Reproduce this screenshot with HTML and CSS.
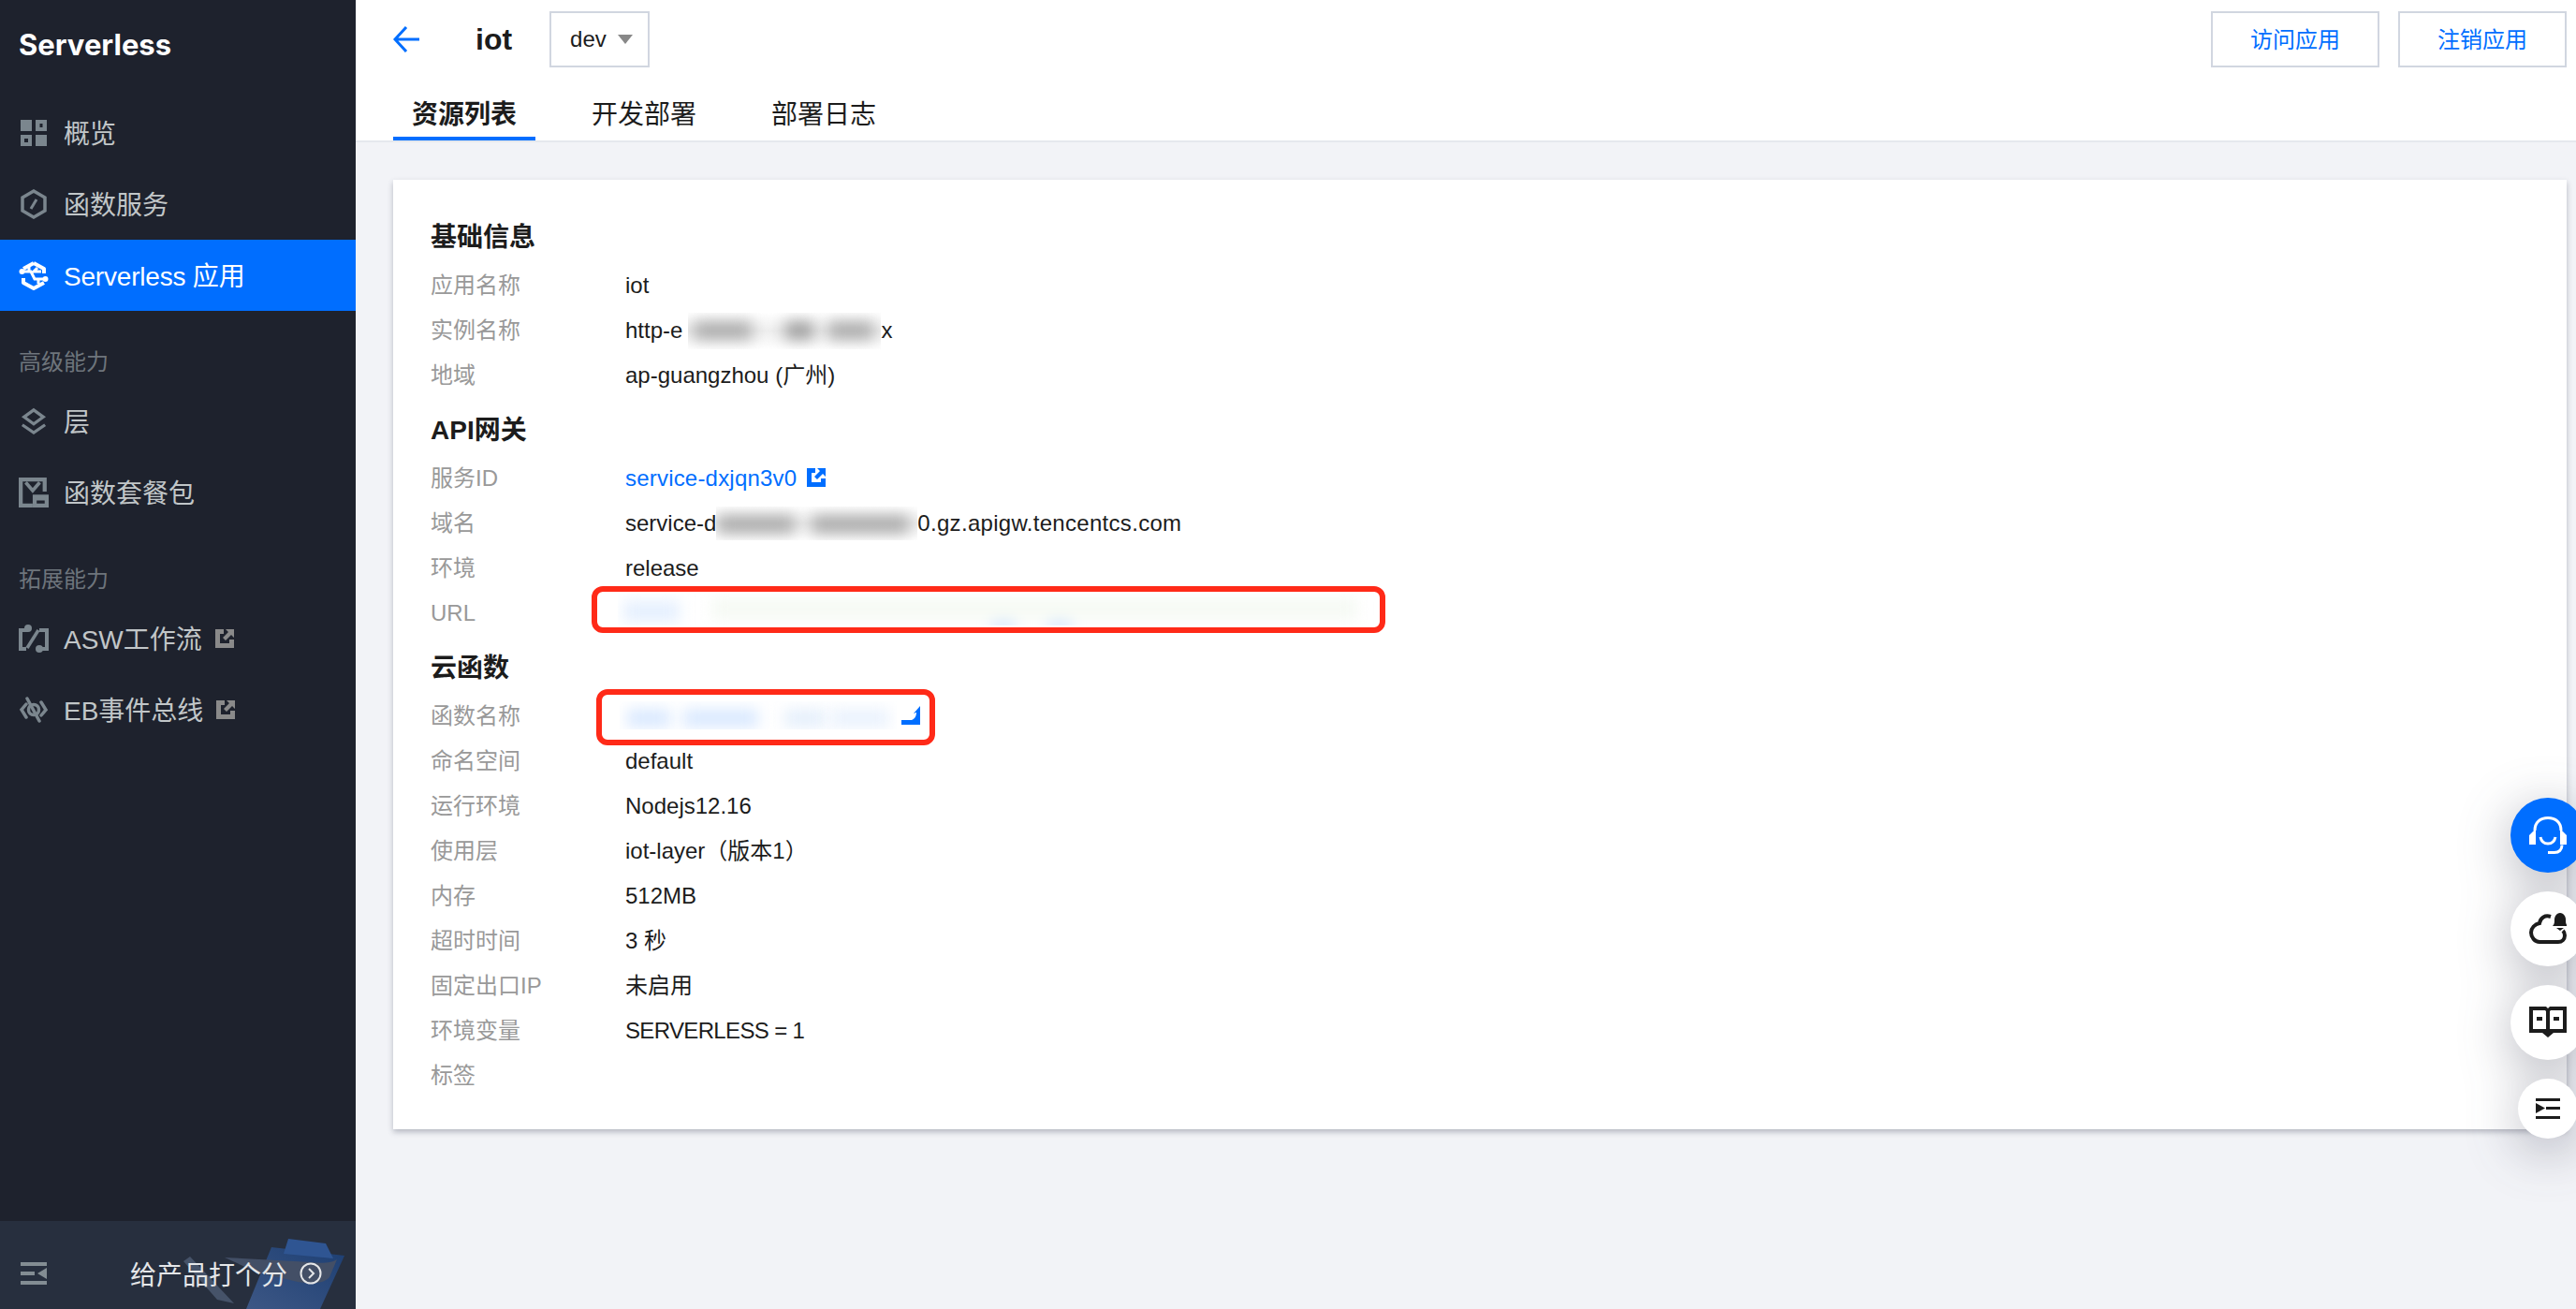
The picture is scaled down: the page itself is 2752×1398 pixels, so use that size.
FILE: index.html
```html
<!DOCTYPE html>
<html lang="zh">
<head>
<meta charset="utf-8">
<title>Serverless 应用</title>
<link rel="stylesheet" href="styles.css">
</head>
<body>
<div class="app">
  <aside class="sidebar">
    <div class="brand">Serverless</div>
    <nav class="nav">
      <a class="item">
        <svg class="ico" viewBox="0 0 28 28"><path fill="currentColor" fill-rule="evenodd" d="M0 0h12v12H0zM16 0h12v12H16zM20.500 4v4h3V4zM0 16h12v12H0zM4 20v4h4v-4zM16 16h12v12H16z"/></svg>
        <span>概览</span>
      </a>
      <a class="item">
        <svg class="ico" viewBox="0 0 28 32"><path fill="none" stroke="currentColor" stroke-width="3.500" d="M14 2 26 9v14l-12 7-12-7V9z"/><path stroke="currentColor" stroke-width="3" d="m11 21 6-10"/></svg>
        <span>函数服务</span>
      </a>
      <a class="item active">
        <svg class="ico wide" viewBox="0 0 32 32"><path fill="none" stroke="#fff" stroke-width="4" stroke-linejoin="round" d="M16 3 27 9v5M27 24l-11 6-11-6v-5M5 9l11-6"/><path fill="none" stroke="#fff" stroke-width="3" d="M3 12h10l4 8h12M11 7v5M21 20v5M20 8l-4 4h8"/><circle cx="3.500" cy="12" r="3" fill="#fff"/><circle cx="28.500" cy="20" r="3" fill="#fff"/></svg>
        <span>Serverless 应用</span>
      </a>
      <div class="group">高级能力</div>
      <a class="item">
        <svg class="ico" viewBox="0 0 30 32"><path fill="none" stroke="currentColor" stroke-width="3.500" d="M15 3 26 11 15 19 4 11z"/><path fill="none" stroke="currentColor" stroke-width="3.500" d="m2 20 13 9 13-9"/></svg>
        <span>层</span>
      </a>
      <a class="item">
        <svg class="ico wide" viewBox="0 0 30 30"><path fill="currentColor" fill-rule="evenodd" d="M0 0h28v14h-4V4H4v22h10v4H0z"/><path fill="none" stroke="currentColor" stroke-width="3.500" d="m7 5 7 8 7-8"/><path fill="currentColor" fill-rule="evenodd" d="M14 17h16v13H14zm4 6v3h8v-3z"/></svg>
        <span>函数套餐包</span>
      </a>
      <div class="group">拓展能力</div>
      <a class="item">
        <svg class="ico wide" viewBox="0 0 32 30"><path fill="currentColor" d="M0 4h10v4H4v16h4v4H0zM22 4h10v24H22v-4h6V8h-6z"/><path stroke="currentColor" stroke-width="3.500" d="m9 25 12-19"/><circle cx="10" cy="4" r="4" fill="currentColor"/><circle cx="22" cy="26" r="4" fill="currentColor"/></svg>
        <span>ASW工作流</span>
        <svg class="ext" viewBox="0 0 20 20"><path fill="#8a8a8a" d="M0 0h9v5H5v10h10v-4h5v9H0zM11 0h9v9l-3-3-6 6-3-3 6-6z"/></svg>
      </a>
      <a class="item">
        <svg class="ico wide" viewBox="0 0 32 30"><path fill="none" stroke="currentColor" stroke-width="3.500" stroke-linecap="round" d="M9 3l13 24M8 9 3 15l5 8M24 7l5 8-5 6"/><circle cx="16" cy="15" r="5.500" fill="none" stroke="currentColor" stroke-width="3.500"/></svg>
        <span>EB事件总线</span>
        <svg class="ext" viewBox="0 0 20 20"><path fill="#8a8a8a" d="M0 0h9v5H5v10h10v-4h5v9H0zM11 0h9v9l-3-3-6 6-3-3 6-6z"/></svg>
      </a>
    </nav>
    <div class="rate">
      <svg class="rate-art" viewBox="0 0 380 94">
        <defs>
          <linearGradient id="board" x1="0" y1="1" x2="1" y2="0"><stop offset="0" stop-color="#3d5785"/><stop offset="1" stop-color="#1d3f73"/></linearGradient>
        </defs>
        <path fill="url(#board)" d="M290 28 368 37 342 94H263z"/>
        <path fill="#2f5592" d="M308 19 348 24 356 40 303 35z"/>
        <path fill="#465369" d="M196 43 203 38 250 88 232 84z"/>
        <path fill="#434f66" d="M240 39 332 44C345 46 356 44 360 41L352 60C345 68 330 67 318 65L275 55z"/>
      </svg>
      <svg class="collapse" viewBox="0 0 28 24"><path fill="#838d93" d="M0 0h28v4H0zM0 10h15v4H0zM0 20h28v4H0zM28 6v12l-10-6z"/></svg>
      <span class="rate-text">给产品打个分</span>
      <svg class="rate-go" viewBox="0 0 24 24"><circle cx="12" cy="12" r="10.500" fill="none" stroke="#e4e6e8" stroke-width="2"/><path fill="none" stroke="#e4e6e8" stroke-width="2" d="m10 7 5 5-5 5"/></svg>
    </div>
  </aside>

  <main class="main">
    <header class="head">
      <div class="head-top">
        <svg class="back" viewBox="0 0 28 28"><path fill="none" stroke="#006eff" stroke-width="3" d="M28 14H2M14 1 2 14l12 13"/></svg>
        <h1 class="title">iot</h1>
        <div class="select"><span>dev</span><i class="caret"></i></div>
        <div class="actions">
          <button class="btn">访问应用</button>
          <button class="btn">注销应用</button>
        </div>
      </div>
      <div class="tabs">
        <a class="tab on">资源列表</a>
        <a class="tab">开发部署</a>
        <a class="tab">部署日志</a>
      </div>
    </header>

    <section class="card">
      <h2 class="sec first">基础信息</h2>
      <div class="row"><span class="k">应用名称</span><span class="v">iot</span></div>
      <div class="row"><span class="k">实例名称</span><span class="v">http-e<span class="mask m-inst"><i class="b1"></i><i class="b2"></i><i class="b3"></i></span>x</span></div>
      <div class="row"><span class="k">地域</span><span class="v">ap-guangzhou (广州)</span></div>

      <h2 class="sec">API网关</h2>
      <div class="row"><span class="k">服务ID</span><span class="v"><a class="link">service-dxjqn3v0</a><svg class="ext blue" viewBox="0 0 20 20"><path fill="#006eff" d="M0 0h9v5H5v10h10v-4h5v9H0zM11 0h9v9l-3-3-6 6-3-3 6-6z"/></svg></span></div>
      <div class="row"><span class="k">域名</span><span class="v">service-d<span class="mask m-dom"><i class="b1"></i><i class="b2"></i></span><span class="stretch">0.gz.apigw.tencentcs.com</span></span></div>
      <div class="row"><span class="k">环境</span><span class="v">release</span></div>
      <div class="row"><span class="k">URL</span><span class="v"></span>
        <span class="note note-url"><span class="pale pale-url"><i></i><i></i><i></i><i></i></span></span>
      </div>

      <h2 class="sec">云函数</h2>
      <div class="row"><span class="k">函数名称</span><span class="v"></span>
        <span class="note note-fn"><span class="pale pale-fn"><i></i><i></i><i></i><i></i></span>
          <svg class="fn-ext" viewBox="0 0 20 20"><path fill="#006eff" d="M0 15h11c3-1 5-4 5-8l-3 1 7-8v20H0z"/></svg>
        </span>
      </div>
      <div class="row"><span class="k">命名空间</span><span class="v">default</span></div>
      <div class="row"><span class="k">运行环境</span><span class="v">Nodejs12.16</span></div>
      <div class="row"><span class="k">使用层</span><span class="v">iot-layer（版本1）</span></div>
      <div class="row"><span class="k">内存</span><span class="v">512MB</span></div>
      <div class="row"><span class="k">超时时间</span><span class="v">3 秒</span></div>
      <div class="row"><span class="k">固定出口IP</span><span class="v">未启用</span></div>
      <div class="row"><span class="k">环境变量</span><span class="v squeeze">SERVERLESS = 1</span></div>
      <div class="row"><span class="k">标签</span><span class="v"></span></div>
    </section>
  </main>
</div>

<div class="rail">
  <div class="fab primary">
    <svg viewBox="0 0 40 40"><path fill="none" stroke="#fff" stroke-width="3" d="M6 15C6 6 12 1.500 20 1.500S34 6 34 15M12 22c1 5 4 7 8 7s7-2 8-7M20 38.500h7c5 0 8-3 8-8"/><path fill="#fff" d="M0 20 7 13v17H0zM33 13l7 7v10h-7z"/></svg>
  </div>
  <div class="fab">
    <svg viewBox="0 0 40 40"><path fill="none" stroke="#1c1c1c" stroke-width="4" d="M23 7C17 5 12 8 11 14 6 15 2 19 2 24c0 5 4 10 9 10h20c4 0 7-3 7-7 0-2-1-4-2-5"/><path fill="#1c1c1c" d="M25 17c2-2 2-4 2-7s2-7 6-7 6 4 6 7 0 5 2 7zM29 19h8l-4 3z"/></svg>
  </div>
  <div class="fab">
    <svg viewBox="0 0 40 40"><path fill="#1c1c1c" fill-rule="evenodd" d="M0 3h18l2 2 2-2h18v28H26l-6 5-6-5H0zM4 7v20h14V8l-1-1zM23 7l-1 1v19h14V7zM8 14h6v4H8zM26 14h6v4h-6z"/></svg>
  </div>
  <div class="fab small">
    <svg viewBox="0 0 26 22"><path fill="#1c1c1c" d="M0 0h26v3H0zM11 9h15v3H11zM0 19h26v3H0zM0 5l10 5.500L0 16z"/></svg>
  </div>
</div>
</body>
</html>
```
FILE: styles.css
```css
* { box-sizing: border-box; }
html, body { margin: 0; height: 100%; overflow: hidden; }
body {
  font-family: "Liberation Sans", "Noto Sans CJK SC", sans-serif;
  font-size: 24px;
  color: #1c1c1c;
  background: #f2f3f7;
}
h1, h2 { margin: 0; }
.app { display: flex; height: 1398px; }

/* sidebar */
.sidebar {
  width: 380px;
  flex: none;
  display: flex;
  flex-direction: column;
  background: #1e222d;
  color: #c1c6c8;
}
.brand {
  height: 104px;
  padding: 29px 0 0 20px;
  font: 700 31px/38px Inter, "Liberation Sans", sans-serif;
  color: #fff;
}
.nav { flex: 1; display: flex; flex-direction: column; }
.item {
  display: flex;
  align-items: center;
  height: 76px;
  flex: none;
  padding-left: 22px;
  font-size: 28px;
}
.item span { padding-bottom: 3px; }
.item .ico { width: 28px; height: 32px; margin-right: 18px; color: #7b868e; flex: none; }
.item .ico.wide { width: 32px; margin-left: -2px; margin-right: 16px; }
.item.active { background: #006eff; color: #fff; }
.item.active span { letter-spacing: -.2px; }
.group {
  height: 32px;
  margin-top: 39px;
  margin-bottom: 9px;
  padding-left: 20px;
  font-size: 24px;
  line-height: 32px;
  color: #6e757c;
}
.ext { width: 20px; height: 20px; margin-left: 14px; flex: none; }
.rate {
  position: relative;
  flex: none;
  height: 94px;
  display: flex;
  align-items: center;
  padding: 18px 36px 0 22px;
  background: #272f3e;
  color: #e4e6e8;
  overflow: hidden;
  font-size: 28px;
}
.rate-art { position: absolute; left: 0; top: 0; width: 380px; height: 94px; }
.collapse { position: relative; width: 28px; height: 24px; }
.rate-text { position: relative; margin-left: auto; }
.rate-go { position: relative; width: 24px; height: 24px; margin-left: 13px; }

/* header */
.main { flex: 1; min-width: 0; }
.head {
  height: 152px;
  background: #fff;
  border-bottom: 2px solid #e5e8ee;
  padding: 12px 10px 0 40px;
}
.head-top { display: flex; align-items: center; height: 60px; }
.back { width: 28px; height: 28px; margin-right: 60px; }
.title { font-size: 32px; line-height: 60px; font-weight: 700; margin-right: 40px; }
.select {
  width: 107px;
  height: 60px;
  border: 2px solid #d1d6e0;
  display: flex;
  align-items: center;
  padding-left: 20px;
}
.caret {
  width: 0;
  height: 0;
  margin-left: 12px;
  border-left: 8px solid transparent;
  border-right: 8px solid transparent;
  border-top: 10px solid #888;
}
.actions { margin-left: auto; display: flex; gap: 20px; }
.btn {
  width: 180px;
  height: 60px;
  background: #fff;
  border: 2px solid #d1d6e0;
  color: #006eff;
  font: inherit;
  padding: 0 0 3px;
}
.tabs { display: flex; gap: 40px; margin-top: 12px; }
.tab {
  height: 66px;
  padding: 19px 20px 0;
  font-size: 28px;
  line-height: 40px;
  border-bottom: 4px solid transparent;
}
.tab.on { font-weight: 700; border-bottom-color: #006eff; }

/* card */
.card {
  margin: 40px 10px 0 40px;
  padding: 40px 40px 34px;
  background: #fff;
  box-shadow: 0 3px 6px rgba(54, 58, 80, .32);
}
.sec {
  height: 40px;
  font-size: 28px;
  line-height: 44px;
  font-weight: 700;
  margin: 14px 0 8px;
}
.sec.first { margin-top: 0; }
.row { position: relative; display: flex; height: 48px; padding-top: 1px; line-height: 48px; }
.k { width: 208px; flex: none; color: #999; }
.v { display: flex; align-items: flex-start; white-space: pre; }
.link { color: #006eff; letter-spacing: .2px; }
.ext.blue { margin: 13px 0 0 11px; }
.stretch { letter-spacing: .3px; }
.squeeze { letter-spacing: -.65px; }

/* privacy masks */
.mask {
  position: relative;
  display: block;
  flex: none;
  overflow: hidden;
  background: linear-gradient(#fff, #eeeeee 50%, #fff);
}
.mask i { position: absolute; top: 10px; height: 18px; background: #a8a8a8; filter: blur(8px); }
.m-inst { width: 206px; height: 39px; margin: 5px 0 0 6px; }
.m-inst .b1 { left: 6px; width: 62px; }
.m-inst .b2 { left: 104px; width: 30px; background: #999; }
.m-inst .b3 { left: 150px; width: 48px; }
.m-dom { width: 215px; height: 36px; margin-top: 6px; }
.m-dom .b1 { left: 2px; width: 82px; }
.m-dom .b2 { left: 102px; width: 104px; }

/* annotation boxes */
.note {
  position: absolute;
  border: 6px solid #ff2a18;
  border-radius: 12px;
  background: #fff;
}
.note-url { left: 172px; top: -4px; width: 848px; height: 50px; }
.note-fn { left: 177px; top: -4px; width: 362px; height: 60px; }
.pale { position: absolute; overflow: hidden; display: block; }
.pale i { position: absolute; display: block; filter: blur(8px); }
.pale-url { left: 22px; top: 2px; width: 808px; height: 34px; }
.pale-url i:nth-child(1) { left: 6px; top: 8px; width: 60px; height: 22px; background: #e4effe; }
.pale-url i:nth-child(2) { left: 400px; top: 22px; width: 24px; height: 14px; background: #c9e0ff; }
.pale-url i:nth-child(3) { left: 460px; top: 22px; width: 24px; height: 14px; background: #c9e0ff; }
.pale-url i:nth-child(4) { left: 100px; top: 4px; width: 690px; height: 24px; background: #f6faf4; }
.pale-fn { left: 19px; top: 7px; width: 296px; height: 30px; }
.pale-fn i { top: 9px; height: 18px; background: #d6e7ff; }
.pale-fn i:nth-child(1) { left: 8px; width: 46px; }
.pale-fn i:nth-child(2) { left: 68px; width: 80px; }
.pale-fn i:nth-child(3) { left: 176px; width: 44px; background: #e3eefb; }
.pale-fn i:nth-child(4) { left: 226px; width: 62px; background: #e8f1fd; }
.fn-ext { position: absolute; left: 320px; top: 12px; width: 20px; height: 20px; }

/* floating rail */
.rail {
  position: fixed;
  top: 852px;
  left: 2682px;
  width: 80px;
  display: flex;
  flex-direction: column;
  align-items: center;
  gap: 20px;
  filter: drop-shadow(0 12px 28px rgba(54, 58, 80, .38));
}
.fab {
  width: 80px;
  height: 80px;
  flex: none;
  border-radius: 50%;
  background: #fff;
  display: flex;
  align-items: center;
  justify-content: center;
}
.fab svg { width: 40px; height: 40px; }
.fab.primary { background: #006eff; }
.fab.small { width: 64px; height: 64px; }
.fab.small svg { width: 26px; height: 22px; }
```
